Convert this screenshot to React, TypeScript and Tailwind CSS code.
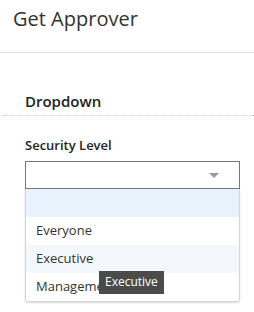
import React from "react";

const options = ["", "Everyone", "Executive", "Management"];

export default function App() {
  return (
    <div className="w-[254px] h-[312px] bg-white text-[#333] overflow-hidden font-['Open_Sans',sans-serif]">
      {/* header */}
      <div className="h-[53px] border-b border-[#dddddd] pl-[13px] pt-[5px]">
        <h1 className="text-[20px] leading-[28px] font-normal">Get Approver</h1>
      </div>

      <div className="pt-[38px]">
        <div className="ml-[3px] border-b border-dotted border-[#c8c8c8] pl-[22px] pb-[4px]">
          <h2 className="text-[15px] leading-[20px] font-semibold text-[#222]">Dropdown</h2>
        </div>

        <div className="pl-[25px] pr-[14px] pt-[20px]">
          <label className="block text-[13px] leading-[18px] font-semibold text-[#222] mb-[7px]">
            Security Level
          </label>

          <div className="relative">
            {/* select */}
            <div className="h-[28px] border border-[#767676] flex items-center justify-end pr-[20px]">
              <svg width="10" height="5" viewBox="0 0 10 5">
                <path d="M0 0h10L5 5z" fill="#9a9a9a" />
              </svg>
            </div>

            {/* dropdown list */}
            <div className="border border-t-0 border-[#d4d4d4] rounded-b-[3px] shadow-[0_1px_2px_rgba(0,0,0,0.15)] overflow-hidden">
              {options.map((o, i) => (
                <div
                  key={i}
                  className={
                    "h-[28px] pl-[10px] flex items-center text-[13px] text-[#333] " +
                    (i === 0 ? "bg-[#e9f3fe]" : i === 2 ? "bg-[#f4f8fd]" : "bg-white")
                  }
                >
                  {o}
                </div>
              ))}
            </div>

            {/* tooltip */}
            <div className="absolute left-[74px] top-[110px] h-[23px] px-[6px] bg-[#4b4b4b] text-white text-[12px] leading-[22px]">
              Executive
            </div>
          </div>
        </div>
      </div>
    </div>
  );
}
